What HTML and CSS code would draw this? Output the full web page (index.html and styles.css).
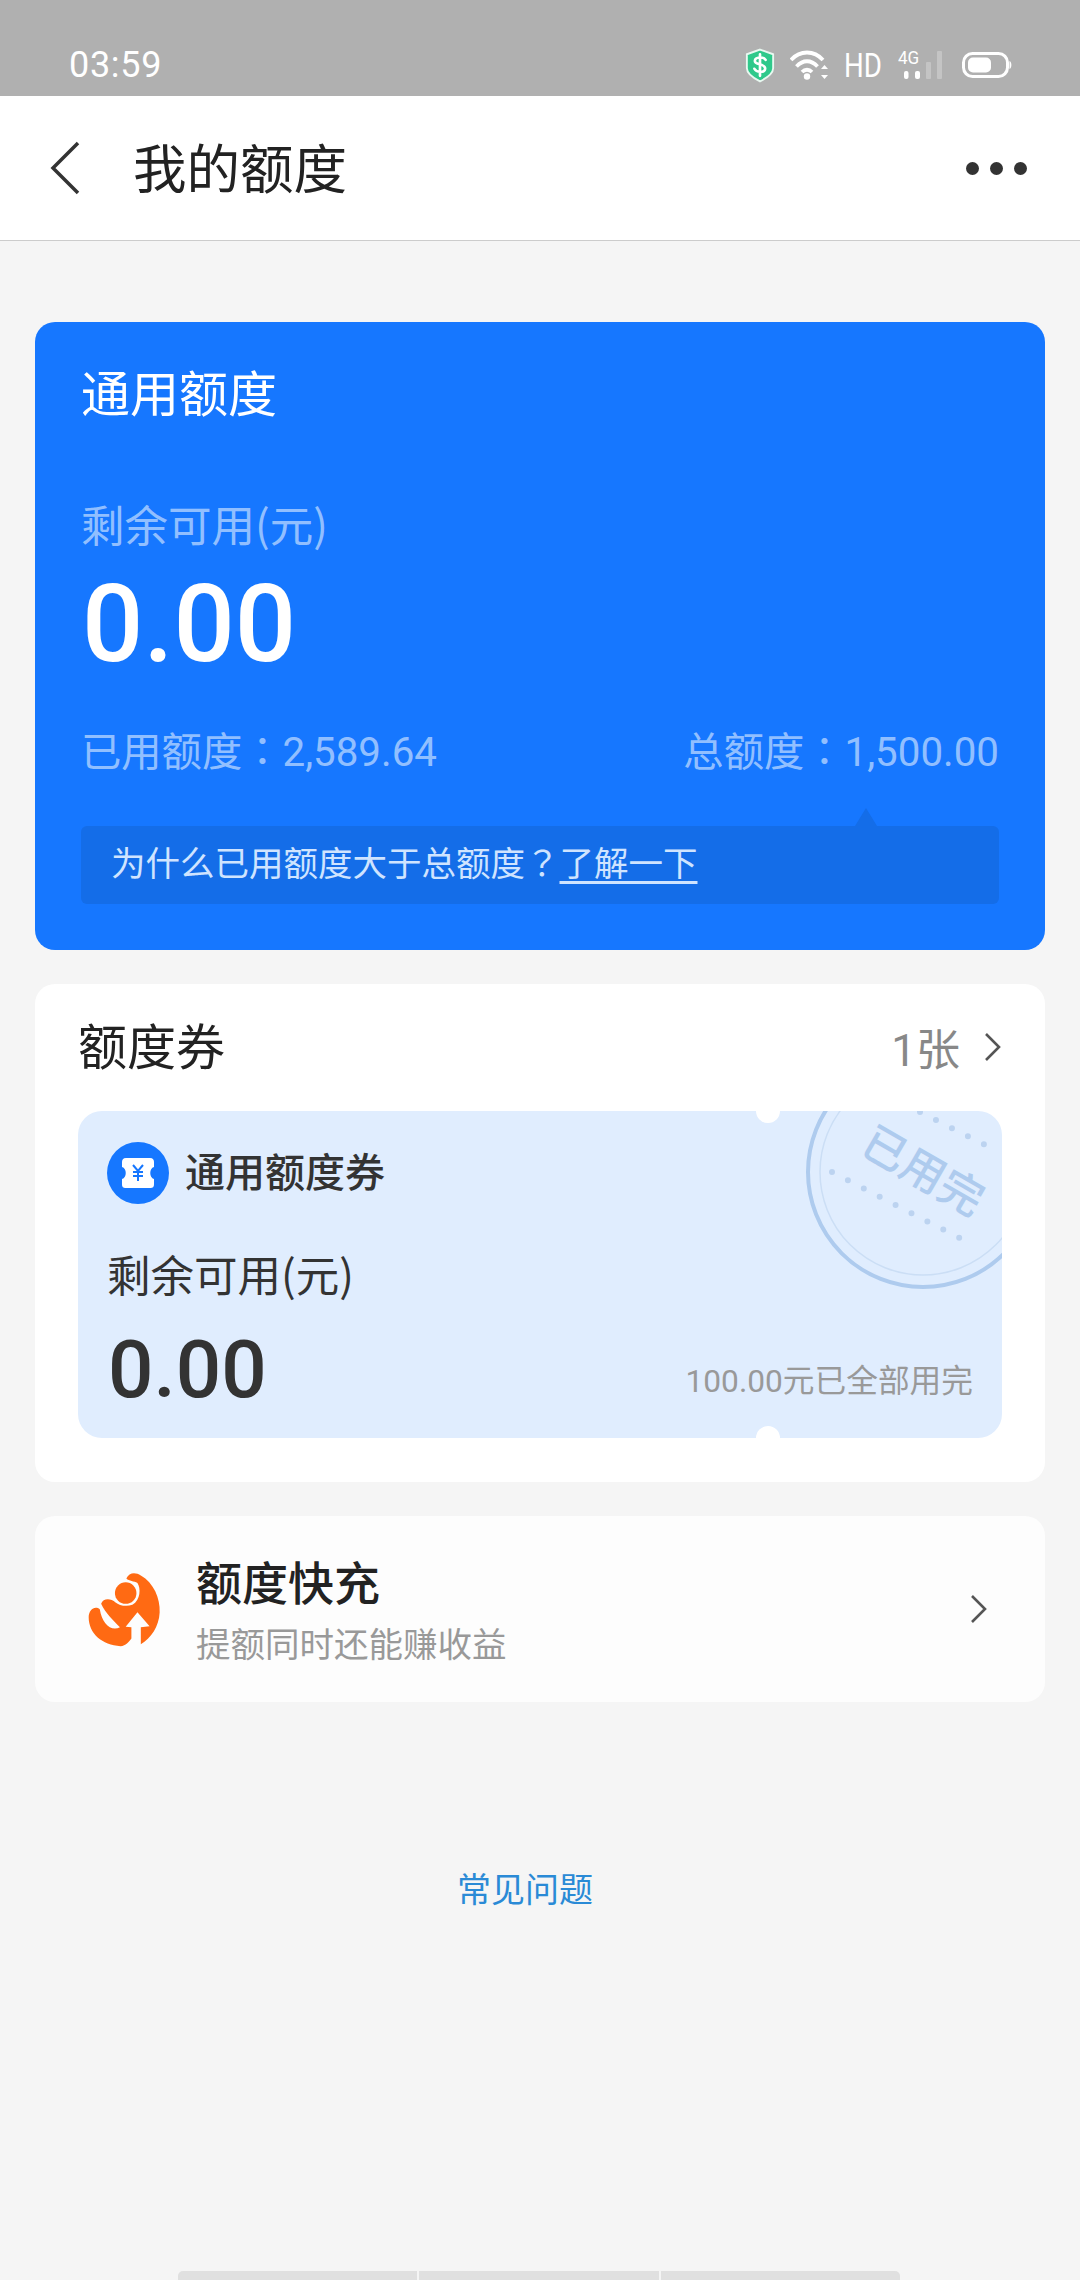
FILE: index.html
```html
<!DOCTYPE html>
<html lang="zh-CN">
<head>
    <meta charset="UTF-8">
    <meta name="viewport" content="width=device-width, initial-scale=1.0">
    <title>我的额度</title>
    <link rel="stylesheet" href="styles.css">
</head>
<body>

    <!-- Status bar -->
    <div class="status-bar">
        <span class="status-time">03:59</span>
        <div class="status-icons">
            <svg class="icon-shield" viewBox="0 0 32 36">
                <path d="M16 1 L30 6 V21 C30 27 22 32 16 35 C10 32 2 27 2 21 V6 Z" fill="#2fc98b" stroke="#e8f8f0" stroke-width="2"/>
                <path d="M22 12 C20 8.500 11 8.500 10.500 13 C10 18 22 15.500 21.500 21.500 C21 26 12 25.500 10 21.500 M16 6 V29" fill="none" stroke="#fff" stroke-width="2.800" stroke-linecap="round"/>
            </svg>
            <svg class="icon-wifi" viewBox="0 0 40 30">
                <path d="M1 10 C10 0 24 0 33 10 M6.500 16.500 C13 9.500 21 9.500 27.500 16.500 M12 22 C15 19 19 19 22 22" fill="none" stroke="#fff" stroke-width="3.800"/>
                <circle cx="17" cy="26.500" r="3.200" fill="#fff"/>
                <path d="M34.500 15 L38 19 H31 Z M34.500 29 L31 25 H38 Z" fill="#fff"/>
            </svg>
            <span class="status-hd">HD</span>
            <div class="status-signal">
                <span class="signal-label">4G</span>
                <svg class="icon-signal" viewBox="0 0 44 28">
                    <rect x="6" y="20" width="4.500" height="8" rx="2" fill="#fff"/>
                    <rect x="17" y="20" width="5" height="8" rx="2" fill="#fff"/>
                    <rect x="28" y="11" width="5" height="17" rx="1" fill="#c4c4c4"/>
                    <rect x="39" y="0" width="5" height="28" rx="1" fill="#c4c4c4"/>
                </svg>
            </div>
            <svg class="icon-battery" viewBox="0 0 50 26">
                <rect x="1.500" y="1.500" width="44" height="23" rx="9" fill="none" stroke="#fff" stroke-width="3"/>
                <rect x="6" y="5.500" width="23" height="15" rx="5" fill="#fff"/>
                <path d="M47.500 9 C50 10 50 16 47.500 17 Z" fill="#fff"/>
            </svg>
        </div>
    </div>

    <!-- Header -->
    <header class="top-nav">
        <svg class="nav-back" viewBox="0 0 32 54">
            <path d="M29 2 L4 27 L29 52" fill="none" stroke="#333" stroke-width="3.500"/>
        </svg>
        <h1 class="nav-title">我的额度</h1>
        <div class="nav-more"><i></i><i></i><i></i></div>
    </header>

    <main class="content">

        <!-- Blue quota card -->
        <section class="quota-card">
            <h2 class="quota-title">通用额度</h2>
            <div class="quota-label">剩余可用(元)</div>
            <div class="quota-amount">0.00</div>
            <div class="quota-row">
                <span>已用额度<span class="punct" lang="zh-TW">：</span>2,589.64</span>
                <span>总额度<span class="punct" lang="zh-TW">：</span>1,500.00</span>
            </div>
            <div class="quota-tip">为什么已用额度大于总额度<span class="punct" lang="zh-TW">？</span><a href="#">了解一下</a></div>
        </section>

        <!-- Vouchers -->
        <section class="card voucher-card">
            <div class="voucher-head">
                <h2 class="voucher-title">额度券</h2>
                <span class="voucher-count">1张</span>
                <svg class="chevron" viewBox="0 0 18 30">
                    <path d="M2 2 L15 15 L2 28" fill="none" stroke="#555" stroke-width="2.600"/>
                </svg>
            </div>
            <div class="ticket">
                <div class="stamp">
                    <svg viewBox="0 0 240 240">
                        <circle cx="120" cy="120" r="115" fill="none" stroke="#aecbee" stroke-width="4"/>
                        <circle cx="120" cy="120" r="103" fill="none" stroke="#cbdef5" stroke-width="1.500"/>
                        <path d="M29 120 L170 193" fill="none" stroke="#bcd3f0" stroke-width="6" stroke-linecap="round" stroke-dasharray="0 17.900"/>
                        <path d="M117 60 L196 100" fill="none" stroke="#bcd3f0" stroke-width="6" stroke-linecap="round" stroke-dasharray="0 17.900"/>
                    </svg>
                    <span class="notch notch-top"></span>
                    <span class="notch notch-bottom"></span>
                </div>
                <span class="stamp-text">已用完</span>
                <div class="ticket-head">
                    <svg class="ticket-icon" viewBox="0 0 62 62">
                        <circle cx="31" cy="31" r="31" fill="#1677ff"/>
                        <path d="M19 16 H43 C46 16 47 18 47 20 V25 C42 26 42 36 47 37 V42 C47 45 46 46 43 46 H19 C16 46 15 45 15 42 V37 C20 36 20 26 15 25 V20 C15 18 16 16 19 16 Z" fill="#fff"/>
                        <path d="M26 23 L31 29 L36 23 M31 29 V39 M26 30 H36 M26 34 H36" fill="none" stroke="#1677ff" stroke-width="2"/>
                    </svg>
                    <span class="ticket-name">通用额度券</span>
                </div>
                <div class="ticket-label">剩余可用(元)</div>
                <div class="ticket-foot">
                    <span class="ticket-amount">0.00</span>
                    <span class="ticket-note">100.00元已全部用完</span>
                </div>
            </div>
        </section>

        <!-- Quick top up -->
        <section class="card boost-card">
            <svg class="boost-logo" viewBox="80 125 220 225">
                <path d="M122 222 C128 205 150 205 165 218 C175 226 195 232 215 225 C240 210 240 175 230 160 C220 155 205 155 197 147 C205 128 225 128 240 138 C278 160 298 205 296 248 C294 290 270 325 240 342 L240 292 L266 289 L230 247 L195 290 L212 292 L212 325 C205 335 195 347 180 348 C125 345 85 310 85 262 C85 240 103 226 118 238 C125 280 150 305 178 292 C158 272 135 250 122 222 Z" fill="#ff6a13"/>
                <circle cx="195" cy="190" r="32" fill="#ff6a13"/>
            </svg>
            <div class="boost-text">
                <h2 class="boost-title">额度快充</h2>
                <p class="boost-desc">提额同时还能赚收益</p>
            </div>
            <svg class="chevron" viewBox="0 0 18 30">
                <path d="M2 2 L15 15 L2 28" fill="none" stroke="#555" stroke-width="2.600"/>
            </svg>
        </section>

        <a class="faq-link" href="#">常见问题</a>
    </main>

    <!-- Bottom gesture bar -->
    <div class="gesture-bar"><i></i><i></i><i></i></div>

</body>
</html>
```

FILE: styles.css
```css
/* General Styles */
body {
    margin: 0;
    width: 1080px;
    height: 2280px;
    overflow: hidden;
    display: flex;
    flex-direction: column;
    background-color: #f5f5f5;
    font-family: "Noto Sans CJK SC", Roboto, sans-serif;
    color: #222;
}

h1, h2, p {
    margin: 0;
    font-weight: 400;
}

a {
    color: inherit;
}

/* Centered full-width punctuation */
.punct {
    font-family: "Noto Sans CJK TC", sans-serif;
}

/* Status bar */
.status-bar {
    height: 96px;
    box-sizing: border-box;
    padding: 42px 68px 0 69px;
    display: flex;
    justify-content: space-between;
    align-items: flex-start;
    background-color: #b0b0b0;
    color: #fff;
}

.status-time {
    font-family: Roboto, sans-serif;
    font-size: 36px;
    line-height: 46px;
    letter-spacing: 0.7px;
}

.status-icons {
    display: flex;
    align-items: center;
    height: 46px;
}

.icon-shield {
    width: 30px;
    height: 35px;
}

.icon-wifi {
    width: 40px;
    height: 30px;
    margin-left: 15px;
}

.status-hd {
    width: 36px;
    margin-left: 14px;
    font-family: Roboto, sans-serif;
    font-size: 33px;
    transform: scaleX(0.84);
    transform-origin: left center;
}

.status-signal {
    position: relative;
    width: 44px;
    height: 28px;
    margin-left: 18px;
}

.signal-label {
    position: absolute;
    left: 0;
    top: -3px;
    font-family: Roboto, sans-serif;
    font-size: 19px;
    line-height: 20px;
    transform: scaleX(0.9);
    transform-origin: left center;
}

.icon-signal {
    width: 44px;
    height: 28px;
    display: block;
}

.icon-battery {
    width: 50px;
    height: 26px;
    margin-left: 20px;
}

/* Header */
.top-nav {
    height: 145px;
    box-sizing: border-box;
    display: flex;
    align-items: center;
    padding: 0 53px 0 49px;
    background-color: #fff;
    border-bottom: 1px solid #ccc;
}

.nav-back {
    width: 32px;
    height: 54px;
}

.nav-title {
    margin-left: 52px;
    padding-bottom: 6px;
    font-size: 53.5px;
    color: #222;
}

.nav-more {
    margin-left: auto;
    display: flex;
    gap: 11px;
}

.nav-more i {
    width: 13px;
    height: 13px;
    border-radius: 50%;
    background-color: #333;
}

/* Content */
.content {
    flex: 1;
    display: flex;
    flex-direction: column;
    padding: 81px 35px 0 35px;
    gap: 34px;
}

/* Blue quota card */
.quota-card {
    height: 628px;
    box-sizing: border-box;
    padding: 38px 46px 0 46px;
    border-radius: 20px;
    background-color: #1677ff;
    color: #fff;
}

.quota-title {
    font-size: 49px;
    line-height: 62px;
}

.quota-label {
    margin-top: 74px;
    font-size: 43.5px;
    line-height: 56px;
    color: rgba(255, 255, 255, 0.55);
}

.quota-amount {
    margin-top: 12px;
    margin-left: 1px;
    font-family: Roboto, sans-serif;
    font-weight: 500;
    font-size: 108px;
    line-height: 120px;
}

.quota-row {
    margin-top: 37px;
    display: flex;
    justify-content: space-between;
    font-family: Roboto, "Noto Sans CJK SC", sans-serif;
    font-size: 40.3px;
    line-height: 56px;
    color: rgba(255, 255, 255, 0.55);
}

.quota-tip {
    position: relative;
    margin-top: 45px;
    height: 78px;
    box-sizing: border-box;
    padding-left: 30px;
    border-radius: 6px;
    background-color: #146de8;
    font-size: 34.5px;
    line-height: 71px;
    color: #cfe4ff;
}

.quota-tip::before {
    content: "";
    position: absolute;
    top: -18px;
    right: 122px;
    border-left: 11px solid transparent;
    border-right: 11px solid transparent;
    border-bottom: 18px solid #146de8;
}

.quota-tip a {
    text-underline-offset: 5px;
}

/* White cards */
.card {
    border-radius: 20px;
    background-color: #fff;
}

.voucher-card {
    height: 498px;
    box-sizing: border-box;
    padding: 32px 43px 0 43px;
}

.voucher-head {
    display: flex;
    align-items: center;
    height: 62px;
}

.voucher-title {
    padding-bottom: 8px;
    font-size: 49px;
    color: #222;
}

.voucher-count {
    margin-left: auto;
    font-family: Roboto, "Noto Sans CJK SC", sans-serif;
    font-size: 44px;
    color: #888;
}

.chevron {
    width: 18px;
    height: 30px;
    margin-left: 24px;
}

/* Ticket */
.ticket {
    position: relative;
    height: 327px;
    margin-top: 33px;
    box-sizing: border-box;
    padding: 30px 29px 0 29px;
    border-radius: 24px;
    background-color: #e0edfe;
}

/* Clips the stamp ring and the notches to the ticket shape */
.stamp {
    position: absolute;
    top: 0;
    left: 0;
    right: 0;
    bottom: 0;
    overflow: hidden;
    border-radius: 24px;
}

.stamp svg {
    position: absolute;
    top: -59px;
    right: -41px;
    width: 240px;
    height: 240px;
}

.notch {
    position: absolute;
    left: 678px;
    width: 24px;
    height: 24px;
    border-radius: 50%;
    background-color: #fff;
}

.notch-top {
    top: -12px;
}

.notch-bottom {
    bottom: -12px;
}

.stamp-text {
    position: absolute;
    top: 57px;
    left: 847px;
    font-size: 44px;
    line-height: 42px;
    font-weight: 500;
    white-space: nowrap;
    color: #aecbee;
    transform: translate(-50%, -50%) rotate(30deg);
}

.ticket-head {
    position: relative;
    display: flex;
    align-items: center;
}

.ticket-icon {
    width: 62px;
    height: 62px;
}

.ticket-name {
    margin-left: 16px;
    padding-bottom: 6px;
    font-size: 40px;
    font-weight: 500;
    color: #333;
}

.ticket-label {
    position: relative;
    margin-top: 41px;
    font-size: 43.5px;
    line-height: 56px;
    color: #333;
}

.ticket-foot {
    position: relative;
    margin-top: 18px;
    display: flex;
    justify-content: space-between;
    align-items: flex-end;
}

.ticket-amount {
    margin-left: 1px;
    font-family: Roboto, sans-serif;
    font-weight: 500;
    font-size: 80px;
    line-height: 100px;
    color: #333;
}

.ticket-note {
    padding-bottom: 16px;
    font-family: Roboto, "Noto Sans CJK SC", sans-serif;
    font-size: 31.7px;
    line-height: 44px;
    color: #999;
}

/* Quick top up */
.boost-card {
    height: 186px;
    box-sizing: border-box;
    display: flex;
    align-items: center;
    padding: 0 57px 0 52px;
    background-color: #fdfdfd;
}

.boost-logo {
    width: 74px;
    height: 76px;
}

.boost-text {
    flex: 1;
    margin-left: 35px;
    padding-bottom: 2px;
}

.boost-title {
    margin-bottom: 7px;
    font-size: 46px;
    line-height: 60px;
    font-weight: 500;
    color: #222;
}

.boost-desc {
    font-size: 34.5px;
    line-height: 50px;
    color: #999;
}

/* FAQ link */
.faq-link {
    align-self: center;
    margin-top: 129px;
    margin-right: 30px;
    font-size: 34px;
    line-height: 46px;
    color: #2a8ad6;
    text-decoration: none;
}

/* Gesture bar */
.gesture-bar {
    height: 9px;
    flex-shrink: 0;
    margin: 0 180px 0 178px;
    display: flex;
    gap: 2px;
}

.gesture-bar i {
    flex: 1;
    background-color: #e0e0e0;
}

.gesture-bar i:first-child {
    border-top-left-radius: 5px;
}

.gesture-bar i:last-child {
    border-top-right-radius: 5px;
}
```
